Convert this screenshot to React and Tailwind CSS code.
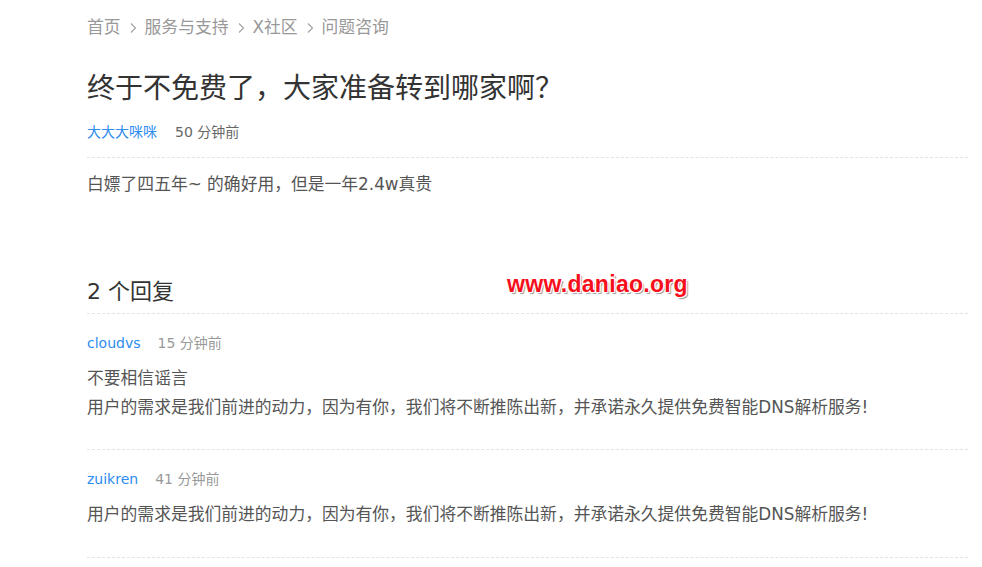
import React from "react";

const Chev = () => (
  <svg width="8" height="12" viewBox="0 0 8 12" className="mx-[8px]" fill="none">
    <path d="M2 1.5 L6.5 6 L2 10.5" stroke="#a0a0a0" strokeWidth="1.1" />
  </svg>
);

export default function App() {
  const font = { fontFamily: '"DejaVu Sans", "Noto Sans CJK SC", sans-serif' };
  return (
    <div className="relative w-[982px] h-[567px] overflow-hidden bg-white" style={font}>
      <div className="ml-[87px] w-[881px]">
        <div className="mt-[16px] flex items-center h-[24px] text-[16.8px] text-[#999]">
          <span>首页</span>
          <Chev />
          <span>服务与支持</span>
          <Chev />
          <span>X社区</span>
          <Chev />
          <span>问题咨询</span>
        </div>
        <h1 className="mt-[29px] h-[40px] leading-[40px] text-[28px] text-[#333] font-normal">
          终于不免费了，大家准备转到哪家啊？
        </h1>
        <div className="mt-[13px] h-[20px] leading-[20px] text-[14px] flex">
          <span className="text-[#2d8cf0]">大大大咪咪</span>
          <span className="ml-[18px] text-[#666]">50 分钟前</span>
        </div>
        <div className="mt-[15px] border-t border-dashed border-[#e3e3e3]" />
        <p className="mt-[14px] h-[24px] leading-[24px] text-[16.8px] text-[#555]">
          白嫖了四五年~ 的确好用，但是一年2.4w真贵
        </p>
        <h2 className="mt-[81px] h-[30px] leading-[30px] text-[22px] text-[#333] font-normal">2 个回复</h2>
        <div className="mt-[6px] border-t border-dashed border-[#e3e3e3]" />

        <div className="mt-[19px] h-[20px] leading-[20px] flex items-baseline text-[14px]">
          <span className="text-[#2d8cf0]">cloudvs</span>
          <span className="ml-[17px] text-[14px] text-[#999]">15 分钟前</span>
        </div>
        <div className="mt-[11px] text-[16.8px] leading-[29px] text-[#555]">
          <div>不要相信谣言</div>
          <div>用户的需求是我们前进的动力，因为有你，我们将不断推陈出新，并承诺永久提供免费智能DNS解析服务!</div>
        </div>
        <div className="mt-[27px] border-t border-dashed border-[#e3e3e3]" />

        <div className="mt-[19px] h-[20px] leading-[20px] flex items-baseline text-[14px]">
          <span className="text-[#2d8cf0]">zuikren</span>
          <span className="ml-[17px] text-[14px] text-[#999]">41 分钟前</span>
        </div>
        <div className="mt-[11px] text-[16.8px] leading-[29px] text-[#555]">
          <div>用户的需求是我们前进的动力，因为有你，我们将不断推陈出新，并承诺永久提供免费智能DNS解析服务!</div>
        </div>
        <div className="mt-[28px] border-t border-dashed border-[#e3e3e3]" />
      </div>

      <div
        className="absolute left-[507px] top-[270px] text-[23px] font-bold text-[#f5101c] leading-[28px] tracking-[0.3px]"
        style={{
          fontFamily: '"Liberation Sans", Arial, sans-serif',
          textShadow:
            "1px 1px 0 #fff, -1px -1px 0 #fff, 1px -1px 0 #fff, -1px 1px 0 #fff, 2px 2px 1px #999",
        }}
      >
        www.daniao.org
      </div>
    </div>
  );
}
